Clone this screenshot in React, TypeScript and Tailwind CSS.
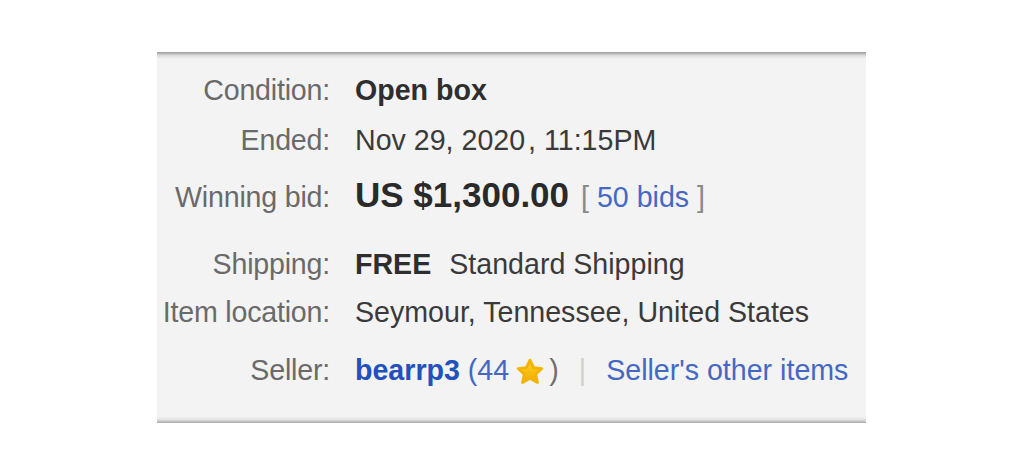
import React from "react";

function Star() {
  return (
    <svg width="28" height="27" viewBox="0 0 24 23" className="inline-block">
      <defs>
        <linearGradient id="sg" x1="0" y1="0" x2="0" y2="1">
          <stop offset="0" stopColor="#ffd427" />
          <stop offset="1" stopColor="#f3a800" />
        </linearGradient>
      </defs>
      <path
        d="M12 1.8 L15.1 8.2 L22.2 9 L16.9 13.9 L18.4 20.9 L12 17.4 L5.6 20.9 L7.1 13.9 L1.8 9 L8.9 8.2 Z"
        fill="url(#sg)"
        stroke="#f3b400"
        strokeWidth="2.4"
        strokeLinejoin="round"
      />
    </svg>
  );
}

function Row({
  label,
  children,
  className,
}: {
  label: string;
  children: React.ReactNode;
  className?: string;
}) {
  return (
    <div className={"flex items-baseline h-[40px] leading-[40px] " + (className || "")}>
      <div className="w-[173px] shrink-0 text-right text-[28.6px] text-[#6a6a6a] tracking-[-0.2px]">
        {label}
      </div>
      <div className="ml-[25px] text-[28.6px] text-[#3a3a3a] whitespace-nowrap">{children}</div>
    </div>
  );
}

export default function App() {
  return (
    <div
      className="w-[1024px] h-[465px] bg-white pt-[52px] pl-[157px]"
      style={{ fontFamily: '"Liberation Sans", Arial, sans-serif' }}
    >
      <div className="relative w-[709px] h-[371px] bg-[#f3f3f3] pt-[18px]">
        <div className="absolute left-0 right-0 top-0 h-[7px] bg-gradient-to-b from-[#9a9a9a] via-[#dcdcdc] to-[#f3f3f3]" />
        <div className="absolute left-0 right-0 bottom-0 h-[6px] bg-gradient-to-t from-[#a8a8a8] via-[#dedede] to-[#f3f3f3]" />
        <div className="relative">
          <Row label="Condition:">
            <span className="font-bold text-[28.6px] text-[#2e2e2e]">Open box</span>
          </Row>
          <Row label="Ended:" className="mt-[10px]">
            Nov 29, 2020<span className="ml-[3px]">, 11:15PM</span>
          </Row>
          <Row label="Winning bid:" className="mt-[15px]">
            <span className="font-bold text-[35px] text-[#2a2a2a]">US $1,300.00</span>
            <span className="text-[#8a8a8a] ml-[12px]">[ </span>
            <span className="text-[#4468c4]">50 bids</span>
            <span className="text-[#8a8a8a]"> ]</span>
          </Row>
          <Row label="Shipping:" className="mt-[29px]">
            <span className="font-bold text-[#2e2e2e]">FREE</span>
            <span className="ml-[18px]">Standard Shipping</span>
          </Row>
          <Row label="Item location:" className="mt-[8px]">
            Seymour, Tennessee, United States
          </Row>
          <Row label="Seller:" className="mt-[18px]">
            <span className="font-bold text-[#2250bd]">bearrp3</span>
            <span className="text-[#4468c4]"> (44</span>
            <span className="relative -top-[1px] inline-block ml-[7px]">
              <Star />
            </span>
            <span className="text-[#6e6e6e] ml-[5px]">)</span>
            <span className="text-[#d0d0d0] mx-[20px]">|</span>
            <span className="text-[#4468c4]">Seller's other items</span>
          </Row>
        </div>
      </div>
    </div>
  );
}
